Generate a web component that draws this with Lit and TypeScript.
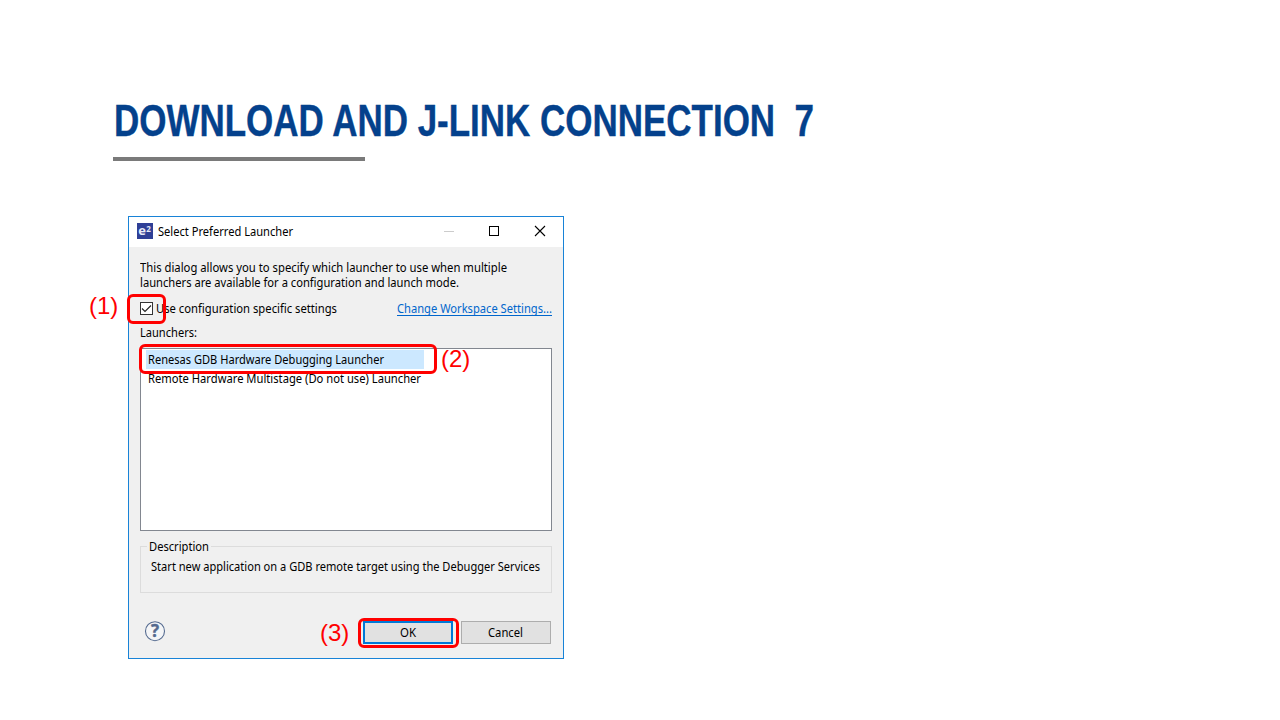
import { LitElement, html, css } from "lit";
import { customElement, property } from "lit/decorators.js";

/** One line of text, condensed or widened to occupy a given width. */
@customElement("fit-line")
class FitLine extends LitElement {
  static styles = css`
    :host { display: block; white-space: pre; }
    .text { display: inline-block; transform-origin: 0 50%; }
  `;
  @property({ type: Number }) width = 0;
  @property() text = "";

  firstUpdated() {
    const span = this.renderRoot.querySelector(".text") as HTMLElement;
    this.style.width = `${this.width}px`;
    const natural = span.getBoundingClientRect().width;
    if (natural > 0) span.style.transform = `scaleX(${this.width / natural})`;
  }
  render() {
    return html`<span class="text">${this.text}</span>`;
  }
}

@customElement("app-root")
class AppRoot extends LitElement {
  static styles = css`
    * { box-sizing: border-box; }
    :host {
      display: block; position: relative; width: 1280px; height: 720px;
      background: #fff; overflow: hidden;
      font: 12.2px/15px "Noto Sans", "Open Sans", sans-serif; color: #000;
    }
    svg { display: block; overflow: visible; }
    .slide { padding: 96px 0 0 113px; }
    .heading {
      margin: 0; height: 61px; padding-left: 1px;
      font: bold 44.5px/50px "Liberation Sans", Arial, sans-serif; color: #04418c;
      -webkit-text-stroke: 0.4px #04418c;
    }
    .rule { width: 252px; height: 4px; background: #7a7a7a; }
    .dialog {
      margin: 55px 0 0 15px; width: 436px; height: 443px;
      border: 1px solid #1883d7; background: #f0f0f0;
      display: flex; flex-direction: column;
    }
    .titlebar {
      height: 30px; background: #fff; display: flex; align-items: center;
      padding: 0 17px 0 8px; flex: none;
    }
    .logo { margin-top: -2px; margin-right: 5px; }
    .caption { margin-top: -2px; }
    .controls { margin-left: auto; display: flex; gap: 35px; margin-top: -2px; }
    .body { padding: 13px 11px 0; display: flex; flex-direction: column; }
    .option { display: flex; align-items: center; margin-top: 11px; height: 15px; }
    .check { margin-right: 3px; }
    .link { margin-left: auto; color: #0066cc; border-bottom: 1px solid #0066cc; height: 14px; line-height: 14px; }
    .label { margin-top: 9px; }
    .list {
      margin-top: 8px; height: 183px; border: 1px solid #828790; background: #fff;
      padding: 1px 0 0 5px;
    }
    .item { width: 278px; height: 20px; line-height: 20px; padding-left: 2px; }
    .selected { background: #cce8ff; height: 19px; }
    .group {
      margin: 8px 0 0; height: 54px; border: 1px solid #dcdcdc; padding: 0 0 0 6px;
      min-width: 0;
    }
    .group legend { padding: 0 2px; }
    .group .desc { padding-left: 4px; margin-top: 5px; }
    .footer { display: flex; align-items: center; margin-top: 28px; padding: 0 1px 0 4px; height: 23px; }
    .help { margin-top: -3px; }
    .button {
      width: 90px; height: 23px; border: 1px solid #adadad; background: #e1e1e1;
      display: flex; align-items: center; justify-content: center; margin-left: 8px;
    }
    .cancel { padding-right: 1px; }
    .primary { border: 2px solid #0078d7; margin-left: auto; }
    .mark { position: absolute; border: 3px solid #f00; border-radius: 6px; }
    .m1 { left: 127px; top: 294px; width: 39px; height: 30px; }
    .m2 { left: 139px; top: 344px; width: 298px; height: 30px; }
    .m3 { left: 358px; top: 618px; width: 101px; height: 30px; }
    .note { position: absolute; font: 24px/28px "Liberation Sans", Arial, sans-serif; color: #f00; }
    .n1 { left: 89px; top: 292px; }
    .n2 { left: 441px; top: 345px; }
    .n3 { left: 320px; top: 619px; }
    .logo-text { font: bold 13px "Open Sans", sans-serif; fill: #e8eaf6; }
    .logo-sup { font: bold 8px "Open Sans", sans-serif; fill: #e8eaf6; }
    .help-text { font: bold 17px "Open Sans", sans-serif; fill: #546a8f; stroke: #546a8f; stroke-width: .4px; }
  `;

  render() {
    return html`
      <div class="slide">
        <h1 class="heading"><fit-line width="700" text="DOWNLOAD AND J-LINK CONNECTION  7"></fit-line></h1>
        <div class="rule"></div>
        <div class="dialog">
          <div class="titlebar">
            <svg class="logo" width="16" height="16" viewBox="0 0 16 16">
              <rect width="16" height="16" fill="#2f3f96" />
              <text class="logo-text" x="1.3" y="12">e</text>
              <text class="logo-sup" x="9.3" y="8.6">2</text>
            </svg>
            <fit-line class="caption" width="135" text="Select Preferred Launcher"></fit-line>
            <div class="controls">
              <svg width="10" height="10"><path d="M0 5.5H10" stroke="#ccc" /></svg>
              <svg width="10" height="10"><rect x=".5" y=".5" width="9" height="9" fill="none" stroke="#000" /></svg>
              <svg width="12" height="10"><path d="M1 0L11 10M11 0L1 10" stroke="#000" stroke-width="1.1" /></svg>
            </div>
          </div>
          <div class="body">
            <fit-line width="367" text="This dialog allows you to specify which launcher to use when multiple"></fit-line>
            <fit-line width="319" text="launchers are available for a configuration and launch mode."></fit-line>
            <div class="option">
              <svg class="check" width="13" height="13">
                <rect x=".5" y=".5" width="12" height="12" fill="#fff" stroke="#333" />
                <path d="M2 6.5L5 9.5L11 3.5" fill="none" stroke="#222" stroke-width="1.1" />
              </svg>
              <fit-line width="181" text="Use configuration specific settings"></fit-line>
              <fit-line class="link" width="155" text="Change Workspace Settings..."></fit-line>
            </div>
            <fit-line class="label" width="57" text="Launchers:"></fit-line>
            <div class="list">
              <div class="item selected"><fit-line width="236" text="Renesas GDB Hardware Debugging Launcher"></fit-line></div>
              <div class="item"><fit-line width="273" text="Remote Hardware Multistage (Do not use) Launcher"></fit-line></div>
            </div>
            <fieldset class="group">
              <legend><fit-line width="60" text="Description"></fit-line></legend>
              <div class="desc"><fit-line width="389" text="Start new application on a GDB remote target using the Debugger Services"></fit-line></div>
            </fieldset>
            <div class="footer">
              <svg class="help" width="21" height="21" viewBox="0 0 21 21">
                <circle cx="11" cy="10.2" r="9.5" fill="#f4f5f7" stroke="#546a8f" stroke-width="1.1" />
                <text class="help-text" x="11" y="16.4" text-anchor="middle">?</text>
              </svg>
              <div class="button primary"><fit-line width="16" text="OK"></fit-line></div>
              <div class="button cancel"><fit-line width="35" text="Cancel"></fit-line></div>
            </div>
          </div>
        </div>
      </div>
      <div class="mark m1"></div>
      <div class="mark m2"></div>
      <div class="mark m3"></div>
      <div class="note n1">(1)</div>
      <div class="note n2">(2)</div>
      <div class="note n3">(3)</div>
    `;
  }
}
